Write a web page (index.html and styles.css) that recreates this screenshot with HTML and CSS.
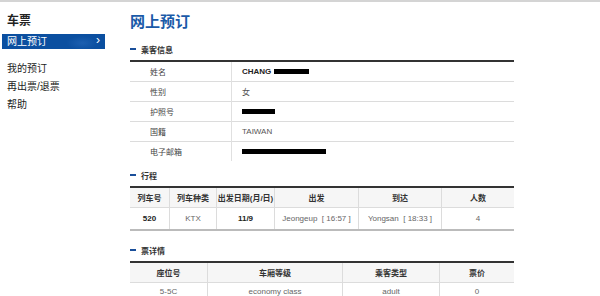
FILE: index.html
```html
<!DOCTYPE html>
<html lang="zh-CN">
<head>
    <meta charset="UTF-8">
    <meta name="viewport" content="width=device-width, initial-scale=1.0">
    <title>网上预订</title>
    <link rel="stylesheet" href="styles.css">
</head>
<body>
    <div class="page">
        <div class="sidebar">
            <h2>车票</h2>
            <ul class="menu">
                <li class="active">网上预订<span class="arrow">&rsaquo;</span></li>
                <li>我的预订</li>
                <li>再出票/退票</li>
                <li>帮助</li>
            </ul>
        </div>

        <div class="main">
            <h1>网上预订</h1>

            <h3 class="section">乘客信息</h3>
            <table class="info">
                <tr><th>姓名</th><td><b>CHANG</b> <span class="mask" style="width: 35px"></span></td></tr>
                <tr><th>性别</th><td>女</td></tr>
                <tr><th>护照号</th><td><span class="mask" style="width: 33px"></span></td></tr>
                <tr><th>国籍</th><td>TAIWAN</td></tr>
                <tr><th>电子邮箱</th><td><span class="mask" style="width: 84px"></span></td></tr>
            </table>

            <h3 class="section">行程</h3>
            <table class="grid trip">
                <tr>
                    <th style="width: 39px">列车号</th>
                    <th style="width: 46px">列车种类</th>
                    <th style="width: 57px">出发日期(月/日)</th>
                    <th style="width: 83px">出发</th>
                    <th style="width: 82px">到达</th>
                    <th>人数</th>
                </tr>
                <tr>
                    <td><b>520</b></td>
                    <td>KTX</td>
                    <td><b>11/9</b></td>
                    <td>Jeongeup &nbsp;[ 16:57 ]</td>
                    <td>Yongsan &nbsp;[ 18:33 ]</td>
                    <td>4</td>
                </tr>
            </table>

            <h3 class="section">票详情</h3>
            <table class="grid ticket">
                <tr>
                    <th style="width: 77px">座位号</th>
                    <th style="width: 134px">车厢等级</th>
                    <th style="width: 96px">乘客类型</th>
                    <th>票价</th>
                </tr>
                <tr>
                    <td>5-5C</td>
                    <td>economy class</td>
                    <td>adult</td>
                    <td>0</td>
                </tr>
            </table>
        </div>
    </div>
</body>
</html>
```

FILE: styles.css
```css
html, body {
    height: 296px;
    overflow: hidden;
}

body {
    margin: 0;
    border-top: 2px solid #d4d4d4;
    box-sizing: border-box;
    font-family: "Liberation Sans", Arial, "Noto Sans CJK SC", sans-serif;
    color: #333;
    background-color: #fff;
}

.page {
    display: flex;
}

.sidebar {
    width: 103px;
    padding-left: 2px;
    flex-shrink: 0;
}

.sidebar h2 {
    margin: 9px 0 0 5px;
    height: 23px;
    font-size: 12px;
    font-weight: bold;
    color: #222;
}

.menu {
    list-style: none;
    margin: 0;
    padding: 0;
}

.menu li {
    height: 18px;
    line-height: 18px;
    padding-left: 5px;
    font-size: 10px;
    color: #222;
}

.menu li.active {
    height: 15px;
    line-height: 15px;
    margin-bottom: 11px;
    background: radial-gradient(ellipse 16px 7px at 78% 60%, #1c5fb0 0%, #0b4fa0 100%);
    background-color: #0b4fa0;
    color: #fff;
    position: relative;
}

.arrow {
    position: absolute;
    right: 5px;
    top: -1px;
    font-size: 12px;
}

.main {
    margin-left: 25px;
    width: 384px;
}

.main h1 {
    margin: 8px 0 0;
    height: 28px;
    font-size: 15px;
    font-weight: bold;
    color: #1a5aa8;
}

.section {
    display: flex;
    align-items: center;
    margin: 0;
    height: 22px;
    font-size: 8px;
    font-weight: bold;
    color: #333;
}

.section::before {
    content: "";
    width: 6px;
    height: 2px;
    margin-right: 5px;
    background-color: #1a4f9a;
}

table {
    width: 384px;
    border-collapse: collapse;
    font-size: 8px;
}

.info {
    border-top: 2px solid #333;
    margin-bottom: 3px;
}

.info th {
    width: 81px;
    height: 19px;
    padding: 0 0 0 20px;
    text-align: left;
    font-weight: normal;
    color: #444;
    border-right: 1px solid #e0e0e0;
}

.info td {
    padding: 0 0 0 10px;
    color: #555;
}

.info tr + tr th,
.info tr + tr td {
    border-top: 1px solid #dcdcdc;
}

.info b {
    color: #222;
}

.mask {
    display: inline-block;
    height: 5px;
    background-color: #000;
    vertical-align: middle;
}

.grid {
    border-top: 2px solid #333;
    border-bottom: 2px solid #bbb;
    margin-bottom: 8px;
}

.grid th {
    height: 19px;
    padding: 0;
    background-color: #f6f6f6;
    font-weight: bold;
    color: #333;
    border-bottom: 1px solid #dcdcdc;
}

.grid td {
    height: 21px;
    padding: 0;
    text-align: center;
    color: #666;
}

.grid th + th,
.grid td + td {
    border-left: 1px solid #dcdcdc;
}

.grid td b {
    color: #222;
}

.ticket {
    border-bottom: none;
}

.ticket th {
    height: 19px;
}

.ticket td {
    height: 16px;
}
```
